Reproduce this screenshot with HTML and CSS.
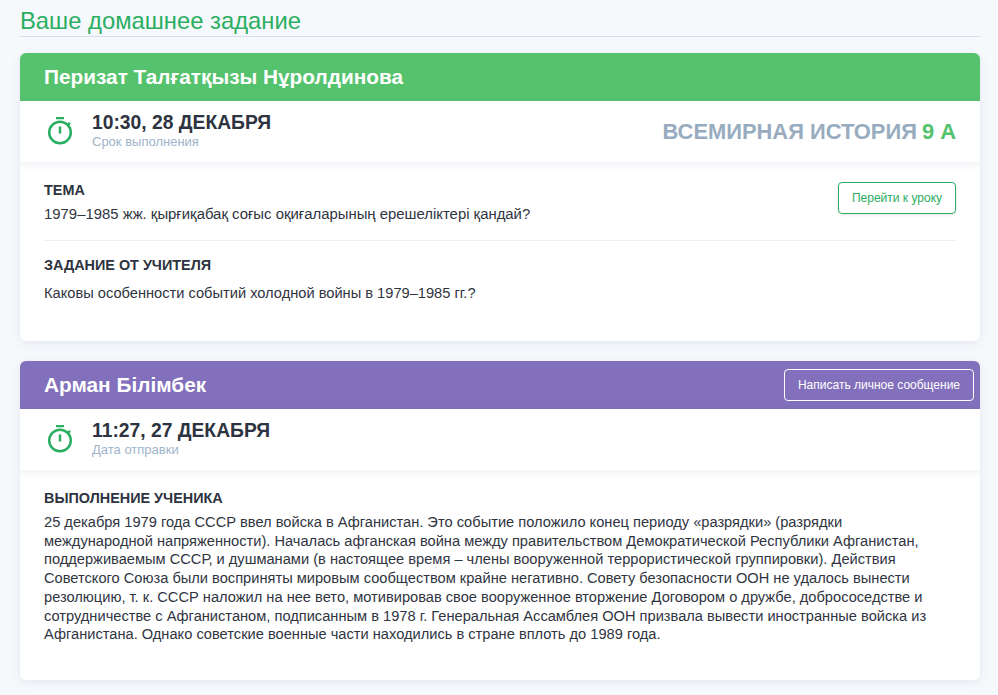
FILE: index.html
```html
<!DOCTYPE html>
<html lang="ru">
<head>
<meta charset="utf-8">
<title>Ваше домашнее задание</title>
<link rel="stylesheet" href="styles.css">
</head>
<body>
<main class="page">
  <h1 class="page-title">Ваше домашнее задание</h1>

  <section class="card">
    <header class="card-head head-green">
      <h2 class="person">Перизат Талғатқызы Нұролдинова</h2>
    </header>
    <div class="meta">
      <svg class="timer" viewBox="0 0 26 30" aria-hidden="true"><path d="M9 1h8M13 9.500v7M20.700 8l2.200-2.200"/><circle cx="13" cy="15.500" r="10.800"/></svg>
      <div class="when">
        <div class="when-time">10:30, 28 ДЕКАБРЯ</div>
        <div class="when-label">Срок выполнения</div>
      </div>
      <div class="subject"><span>ВСЕМИРНАЯ ИСТОРИЯ</span><span class="klass">9 А</span></div>
    </div>
    <div class="body body-task">
      <div class="topic">
        <div class="topic-text">
          <h3 class="label">ТЕМА</h3>
          <p class="text text-kk">1979–1985 жж. қырғиқабақ соғыс оқиғаларының ерешеліктері қандай?</p>
        </div>
        <a class="btn btn-green">Перейти к уроку</a>
      </div>
      <div class="assignment">
        <h3 class="label label-gap">ЗАДАНИЕ ОТ УЧИТЕЛЯ</h3>
        <p class="text">Каковы особенности событий холодной войны в 1979–1985 гг.?</p>
      </div>
    </div>
  </section>

  <section class="card">
    <header class="card-head head-purple">
      <h2 class="person">Арман Білімбек</h2>
      <a class="btn btn-white">Написать личное сообщение</a>
    </header>
    <div class="meta">
      <svg class="timer" viewBox="0 0 26 30" aria-hidden="true"><path d="M9 1h8M13 9.500v7M20.700 8l2.200-2.200"/><circle cx="13" cy="15.500" r="10.800"/></svg>
      <div class="when">
        <div class="when-time">11:27, 27 ДЕКАБРЯ</div>
        <div class="when-label">Дата отправки</div>
      </div>
    </div>
    <div class="body body-answer">
      <h3 class="label label-answer">ВЫПОЛНЕНИЕ УЧЕНИКА</h3>
      <p class="text text-long">25 декабря 1979 года СССР ввел войска в Афганистан. Это событие положило конец периоду «разрядки» (разрядки международной напряженности). Началась афганская война между правительством Демократической Республики Афганистан, поддерживаемым СССР, и душманами (в настоящее время – члены вооруженной террористической группировки). Действия Советского Союза были восприняты мировым сообществом крайне негативно. Совету безопасности ООН не удалось вынести резолюцию, т. к. СССР наложил на нее вето, мотивировав свое вооруженное вторжение Договором о дружбе, добрососедстве и сотрудничестве с Афганистаном, подписанным в 1978 г. Генеральная Ассамблея ООН призвала вывести иностранные войска из Афганистана. Однако советские военные части находились в стране вплоть до 1989 года.</p>
    </div>
  </section>
</main>
</body>
</html>
```

FILE: styles.css
```css
* { box-sizing: border-box; }
html, body { margin: 0; padding: 0; }
body {
  background: #f6f9fc;
  font-family: "Liberation Sans", Arial, sans-serif;
  color: #2d3340;
  height: 695px;
  overflow: hidden;
}
.page { padding: 8px 18px 0 20px; }
.page-title {
  margin: 0 0 16px;
  height: 29px;
  font-size: 23.800px;
  line-height: 26px;
  font-weight: 400;
  color: #2aae62;
  border-bottom: 1px solid #d7deea;
}
.card {
  background: #fff;
  border-radius: 6px;
  box-shadow: 0 2px 10px rgba(60, 80, 120, 0.1);
  margin-bottom: 20px;
  overflow: hidden;
}
.card-head {
  height: 48px;
  display: flex;
  align-items: center;
  justify-content: space-between;
  padding: 0 6px 0 24px;
}
.head-green { background: #55c26d; }
.head-purple { background: #8270bc; }
.person {
  margin: 0;
  font-size: 20.800px;
  line-height: 24px;
  font-weight: 700;
  color: #fff;
}
.meta {
  height: 61px;
  display: flex;
  align-items: center;
  padding: 0 24px 0 27px;
  box-shadow: 0 2px 8px rgba(60, 80, 120, 0.09);
  position: relative;
}
.timer {
  width: 26px;
  height: 30px;
  margin-right: 19px;
  fill: none;
  stroke: #2aae62;
  stroke-width: 2.500;
  flex: none;
}
.when { flex: 1; }
.when-time {
  font-size: 19.300px;
  line-height: 20px;
  font-weight: 700;
  color: #2d3340;
}
.when-label {
  margin-top: 1px;
  font-size: 13px;
  line-height: 16px;
  color: #a0b4ca;
}
.subject {
  display: flex;
  gap: 5px;
  font-size: 21.900px;
  font-weight: 700;
  color: #98acbf;
}
.klass { color: #55c26d; }
.body { padding: 0 24px; }
.body-task { height: 179px; padding-top: 20px; }
.body-answer { height: 210px; padding-top: 20px; }
.topic {
  display: flex;
  justify-content: space-between;
  align-items: flex-start;
  height: 59px;
  border-bottom: 1px solid #edf0f4;
}
.label {
  margin: 0;
  font-size: 14.400px;
  line-height: 16px;
  font-weight: 700;
  color: #2d3340;
}
.label-gap { margin-bottom: 11px; }
.label-answer { margin-bottom: 7px; }
.text {
  margin: 0;
  font-size: 14.650px;
  line-height: 19px;
  color: #30353f;
}
.text-kk { font-size: 14.900px; }
.text-long { line-height: 18.700px; max-width: 905px; }
.topic-text .text { margin-top: 7px; }
.assignment { padding-top: 16px; }
.btn {
  display: flex;
  align-items: center;
  justify-content: center;
  height: 32px;
  border-radius: 4px;
  font-size: 12px;
  background: transparent;
}
.btn-green {
  width: 118px;
  border: 1px solid #2aae62;
  color: #2aae62;
  box-shadow: 0 1px 3px rgba(60, 80, 120, 0.15);
}
.btn-white {
  width: 190px;
  border: 1px solid #fff;
  color: #fff;
}
```
